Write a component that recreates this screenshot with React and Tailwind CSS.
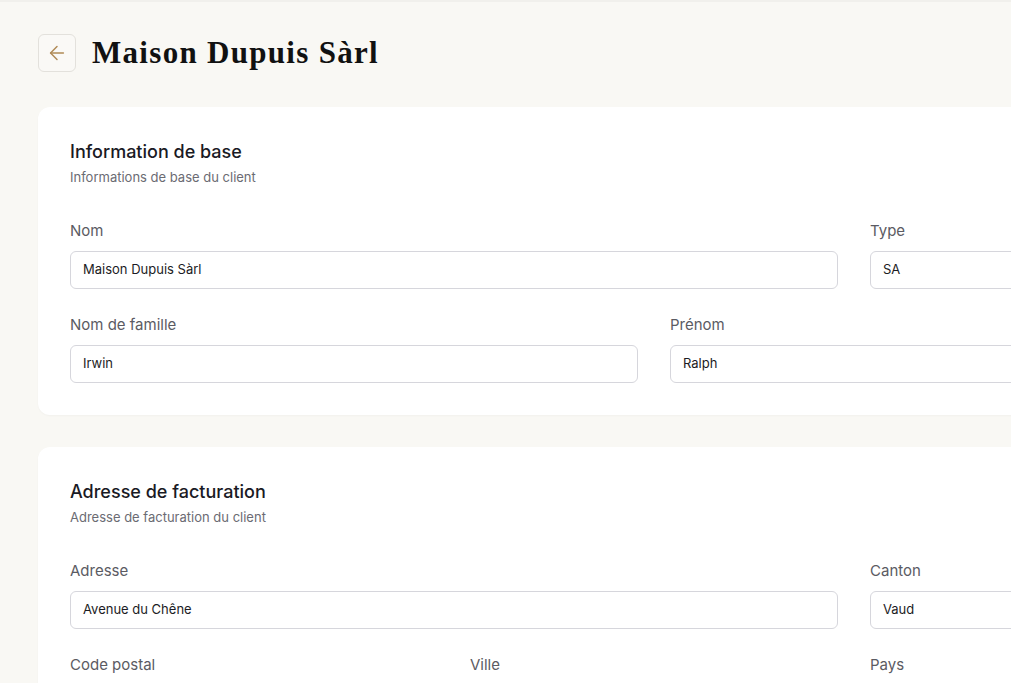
import { ArrowLeft } from 'lucide-react'

function Field({ label, value, span }) {
  return (
    <div className={span}>
      <label className="block mb-[9px] text-[15px] leading-[22px] text-[#5b5b63]">{label}</label>
      <div className="h-[38px] flex items-center px-3 rounded-md border border-[#d6d6dc] bg-white text-[13px] text-[#1c1c24]">
        {value}
      </div>
    </div>
  )
}

function Card({ title, subtitle, children }) {
  return (
    <section className="bg-white rounded-xl px-8 pt-8 pb-8 shadow-[0_1px_2px_rgba(0,0,0,0.03)]">
      <h2 className="text-[18px] leading-[26px] font-medium text-[#1a1a24]">{title}</h2>
      <p className="text-[13px] leading-[20px] text-[#6b6b73] mt-[2px]">{subtitle}</p>
      <div className="grid grid-cols-6 gap-x-8 gap-y-[25px] mt-[33px]">{children}</div>
    </section>
  )
}

export default function App() {
  return (
    <div className="min-h-screen w-[1308px] bg-[#f9f8f4] border-t-2 border-[#f1f0ec] px-[38px] pt-8 pb-10" style={{ fontFamily: 'Inter, "Noto Sans", sans-serif' }}>
      <div className="flex items-center gap-4 mb-[35px]">
        <button className="w-[38px] h-[38px] rounded-md border border-[#e3e1dc] bg-[#faf9f6] flex items-center justify-center text-[#b08a55]">
          <ArrowLeft size={22} strokeWidth={1.6} />
        </button>
        <h1 className="text-[31px] leading-[38px] font-bold text-[#111] tracking-[1.3px]" style={{ fontFamily: '"Liberation Serif", "DejaVu Serif", serif' }}>
          Maison Dupuis Sàrl
        </h1>
      </div>

      <div className="flex flex-col gap-8">
        <Card title="Information de base" subtitle="Informations de base du client">
          <Field span="col-span-4" label="Nom" value="Maison Dupuis Sàrl" />
          <Field span="col-span-2" label="Type" value="SA" />
          <Field span="col-span-3" label="Nom de famille" value="Irwin" />
          <Field span="col-span-3" label="Prénom" value="Ralph" />
        </Card>

        <Card title="Adresse de facturation" subtitle="Adresse de facturation du client">
          <Field span="col-span-4" label="Adresse" value="Avenue du Chêne" />
          <Field span="col-span-2" label="Canton" value="Vaud" />
          <Field span="col-span-2" label="Code postal" value="1000" />
          <Field span="col-span-2" label="Ville" value="Lausanne" />
          <Field span="col-span-2" label="Pays" value="Suisse" />
        </Card>
      </div>
    </div>
  )
}
